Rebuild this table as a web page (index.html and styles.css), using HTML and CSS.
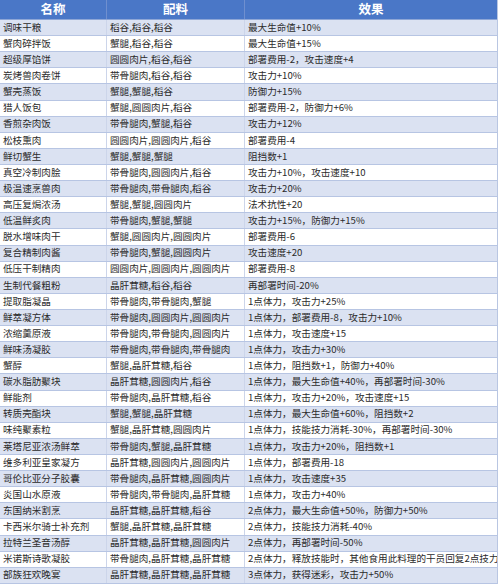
FILE: index.html
```html
<!DOCTYPE html>
<html lang="zh">
<head>
<meta charset="utf-8">
<link rel="stylesheet" href="styles.css">
</head>
<body>
<div class="table">
  <div class="row head"><div class="cell">名称</div><div class="cell">配料</div><div class="cell">效果</div></div>
  <div class="row alt"><div class="cell">调味干粮</div><div class="cell">稻谷,稻谷,稻谷</div><div class="cell">最大生命值+10%</div></div>
  <div class="row"><div class="cell">蟹肉碎拌饭</div><div class="cell">蟹腿,稻谷,稻谷</div><div class="cell">最大生命值+15%</div></div>
  <div class="row alt"><div class="cell">超级厚馅饼</div><div class="cell">圆圆肉片,稻谷,稻谷</div><div class="cell">部署费用-2，攻击速度+4</div></div>
  <div class="row"><div class="cell">炭烤兽肉卷饼</div><div class="cell">带骨腿肉,稻谷,稻谷</div><div class="cell">攻击力+10%</div></div>
  <div class="row alt"><div class="cell">蟹壳蒸饭</div><div class="cell">蟹腿,蟹腿,稻谷</div><div class="cell">防御力+15%</div></div>
  <div class="row"><div class="cell">猎人饭包</div><div class="cell">蟹腿,圆圆肉片,稻谷</div><div class="cell">部署费用-2，防御力+6%</div></div>
  <div class="row alt"><div class="cell">香煎杂肉饭</div><div class="cell">带骨腿肉,蟹腿,稻谷</div><div class="cell">攻击力+12%</div></div>
  <div class="row"><div class="cell">松枝熏肉</div><div class="cell">圆圆肉片,圆圆肉片,稻谷</div><div class="cell">部署费用-4</div></div>
  <div class="row alt"><div class="cell">鲜切蟹生</div><div class="cell">蟹腿,蟹腿,蟹腿</div><div class="cell">阻挡数+1</div></div>
  <div class="row"><div class="cell">真空冷制肉脍</div><div class="cell">带骨腿肉,圆圆肉片,稻谷</div><div class="cell">攻击力+10%，攻击速度+10</div></div>
  <div class="row alt"><div class="cell">极温速烹兽肉</div><div class="cell">带骨腿肉,带骨腿肉,稻谷</div><div class="cell">攻击力+20%</div></div>
  <div class="row"><div class="cell">高压复焗浓汤</div><div class="cell">蟹腿,蟹腿,圆圆肉片</div><div class="cell">法术抗性+20</div></div>
  <div class="row alt"><div class="cell">低温鲜炙肉</div><div class="cell">带骨腿肉,蟹腿,蟹腿</div><div class="cell">攻击力+15%，防御力+15%</div></div>
  <div class="row"><div class="cell">脱水增味肉干</div><div class="cell">蟹腿,圆圆肉片,圆圆肉片</div><div class="cell">部署费用-6</div></div>
  <div class="row alt"><div class="cell">复合精制肉酱</div><div class="cell">带骨腿肉,蟹腿,圆圆肉片</div><div class="cell">攻击速度+20</div></div>
  <div class="row"><div class="cell">低压干制精肉</div><div class="cell">圆圆肉片,圆圆肉片,圆圆肉片</div><div class="cell">部署费用-8</div></div>
  <div class="row alt"><div class="cell">生制代餐粗粉</div><div class="cell">晶肝茸糖,稻谷,稻谷</div><div class="cell">再部署时间-20%</div></div>
  <div class="row"><div class="cell">提取脂凝晶</div><div class="cell">带骨腿肉,带骨腿肉,蟹腿</div><div class="cell">1点体力，攻击力+25%</div></div>
  <div class="row alt"><div class="cell">鲜萃凝方体</div><div class="cell">带骨腿肉,圆圆肉片,圆圆肉片</div><div class="cell">1点体力，部署费用-8，攻击力+10%</div></div>
  <div class="row"><div class="cell">浓缩羹原液</div><div class="cell">带骨腿肉,带骨腿肉,圆圆肉片</div><div class="cell">1点体力，攻击速度+15</div></div>
  <div class="row alt"><div class="cell">鲜味汤凝胶</div><div class="cell">带骨腿肉,带骨腿肉,带骨腿肉</div><div class="cell">1点体力，攻击力+30%</div></div>
  <div class="row"><div class="cell">蟹醇</div><div class="cell">蟹腿,晶肝茸糖,稻谷</div><div class="cell">1点体力，阻挡数+1，防御力+40%</div></div>
  <div class="row alt"><div class="cell">碳水脂肪聚块</div><div class="cell">晶肝茸糖,圆圆肉片,稻谷</div><div class="cell">1点体力，最大生命值+40%，再部署时间-30%</div></div>
  <div class="row"><div class="cell">鲜能剂</div><div class="cell">带骨腿肉,晶肝茸糖,稻谷</div><div class="cell">1点体力，攻击力+20%，攻击速度+15</div></div>
  <div class="row alt"><div class="cell">转质壳酯块</div><div class="cell">蟹腿,蟹腿,晶肝茸糖</div><div class="cell">1点体力，最大生命值+60%，阻挡数+2</div></div>
  <div class="row"><div class="cell">味纯聚素粒</div><div class="cell">蟹腿,晶肝茸糖,圆圆肉片</div><div class="cell">1点体力，技能技力消耗-30%，再部署时间-30%</div></div>
  <div class="row alt"><div class="cell">莱塔尼亚浓汤鲜萃</div><div class="cell">带骨腿肉,蟹腿,晶肝茸糖</div><div class="cell">1点体力，攻击力+20%，阻挡数+1</div></div>
  <div class="row"><div class="cell">维多利亚皇家凝方</div><div class="cell">晶肝茸糖,圆圆肉片,圆圆肉片</div><div class="cell">1点体力，部署费用-18</div></div>
  <div class="row alt"><div class="cell">哥伦比亚分子胶囊</div><div class="cell">带骨腿肉,晶肝茸糖,圆圆肉片</div><div class="cell">1点体力，攻击速度+35</div></div>
  <div class="row"><div class="cell">炎国山水原液</div><div class="cell">带骨腿肉,带骨腿肉,晶肝茸糖</div><div class="cell">1点体力，攻击力+40%</div></div>
  <div class="row alt"><div class="cell">东国纳米割烹</div><div class="cell">晶肝茸糖,晶肝茸糖,稻谷</div><div class="cell">2点体力，最大生命值+50%，防御力+50%</div></div>
  <div class="row"><div class="cell">卡西米尔骑士补充剂</div><div class="cell">蟹腿,晶肝茸糖,晶肝茸糖</div><div class="cell">2点体力，技能技力消耗-40%</div></div>
  <div class="row alt"><div class="cell">拉特兰圣音汤醇</div><div class="cell">晶肝茸糖,晶肝茸糖,圆圆肉片</div><div class="cell">2点体力，再部署时间-50%</div></div>
  <div class="row"><div class="cell">米诺斯诗歌凝胶</div><div class="cell">带骨腿肉,晶肝茸糖,晶肝茸糖</div><div class="cell">2点体力，释放技能时，其他食用此料理的干员回复2点技力</div></div>
  <div class="row alt"><div class="cell">部族狂欢晚宴</div><div class="cell">晶肝茸糖,晶肝茸糖,晶肝茸糖</div><div class="cell">3点体力，获得迷彩，攻击力+50%</div></div>
</div>
</body>
</html>
```
FILE: styles.css
```css
html, body {
  margin: 0;
  padding: 0;
  background: #ffffff;
}
body {
  width: 500px;
  height: 584px;
  overflow: hidden;
  font-family: "Noto Sans CJK SC", "Noto Sans", sans-serif;
}
.table {
  width: 498px;
  height: 584px;
  display: flex;
  flex-direction: column;
  border-right: 1px solid #b9c6e2;
  box-sizing: border-box;
}
.row {
  flex: 1 1 0;
  min-height: 0;
  display: grid;
  grid-template-columns: 107px 138px 1fr;
  border-bottom: 1px solid #b7c5e3;
  background: #ffffff;
  color: #2b2b2b;
  font-size: 9.6px;
}
.row.alt {
  background: #dbe2f2;
}
.row.head {
  flex: 0 0 19px;
  background: #4a77c7;
  color: #ffffff;
  font-weight: bold;
  font-size: 12.5px;
  border-bottom: 1px solid #8ea6d6;
}
.cell {
  display: flex;
  align-items: center;
  padding-left: 3px;
  white-space: nowrap;
  overflow: hidden;
  border-right: 1px solid #ccd5ea;
  line-height: 1;
}
.cell:last-child {
  border-right: none;
}
.head .cell {
  justify-content: center;
  padding-left: 0;
  border-right: 1px solid #6f8fcf;
}
.head .cell:last-child {
  border-right: none;
}
```
